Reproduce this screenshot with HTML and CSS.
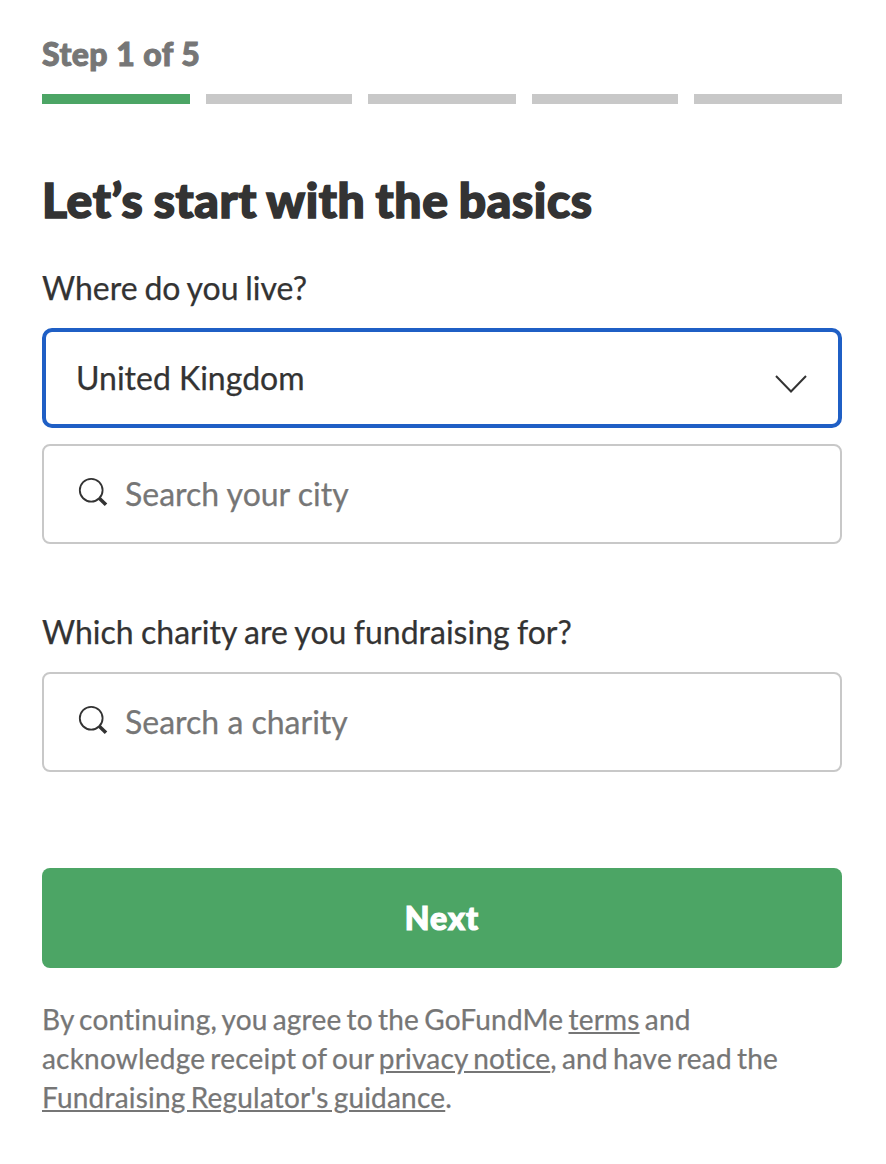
FILE: index.html
```html
<!doctype html>
<html lang="en">
<head>
    <meta charset="utf-8">
    <meta name="viewport" content="width=device-width, initial-scale=1.0">
    <title>Let’s start with the basics</title>
    <link rel="stylesheet" href="styles.css">
</head>
<body>
    <form class="container">
        <div class="step">Step 1 of 5</div>
        <div class="progress">
            <span class="bar active"></span>
            <span class="bar"></span>
            <span class="bar"></span>
            <span class="bar"></span>
            <span class="bar"></span>
        </div>

        <h1>Let’s start with the basics</h1>

        <div class="label">Where do you live?</div>
        <div class="field select">
            <span class="value">United Kingdom</span>
            <svg class="arrow" width="34" height="20" viewBox="0 0 34 20">
                <path d="M2 2 L17 17.5 L32 2" fill="none" stroke="#333" stroke-width="2"/>
            </svg>
        </div>
        <div class="field">
            <svg class="search" width="30" height="30" viewBox="0 0 30 30">
                <circle cx="13.2" cy="13.2" r="11.4" fill="none" stroke="#333" stroke-width="1.8"/>
                <path d="M21 21 L28 27.7" stroke="#333" stroke-width="3.6"/>
            </svg>
            <span class="placeholder">Search your city</span>
        </div>

        <div class="label charity">Which charity are you fundraising for?</div>
        <div class="field">
            <svg class="search" width="30" height="30" viewBox="0 0 30 30">
                <circle cx="13.2" cy="13.2" r="11.4" fill="none" stroke="#333" stroke-width="1.8"/>
                <path d="M21 21 L28 27.7" stroke="#333" stroke-width="3.6"/>
            </svg>
            <span class="placeholder">Search a charity</span>
        </div>

        <button class="next" type="button">Next</button>

        <p class="legal">By continuing, you agree to the GoFundMe <a href="#">terms</a> and<br>acknowledge receipt of our <a href="#">privacy notice</a>, and have read the<br><a href="#">Fundraising Regulator's guidance</a>.</p>
    </form>
</body>
</html>
```
FILE: styles.css
```css
* {
    box-sizing: border-box;
}

body {
    margin: 0;
    background: #fff;
    color: #333;
    font-family: Lato, sans-serif;
    -webkit-text-stroke: 0.25px;
}

.container {
    width: 800px;
    margin-left: 42px;
    padding-top: 34px;
}

.step {
    height: 60px;
    line-height: 40px;
    font-size: 32px;
    font-weight: 900;
    letter-spacing: 0.45px;
    -webkit-text-stroke: 1px #767676;
    color: #767676;
}

.progress {
    display: grid;
    grid-template-columns: 148px 146px 148px 146px 148px;
    gap: 16px;
}

.bar {
    height: 10px;
    background: #c8c8c8;
}

.bar.active {
    background: #4ca565;
}

h1 {
    margin: 66px 0 0;
    line-height: 60px;
    font-size: 48px;
    font-weight: 900;
    letter-spacing: 0.6px;
    word-spacing: -1.7px;
    -webkit-text-stroke: 1.6px #333;
}

.label {
    margin-top: 38px;
    height: 60px;
    line-height: 40px;
    font-size: 32px;
    word-spacing: -1.4px;
}

.label.charity {
    margin-top: 68px;
    word-spacing: -0.8px;
}

.field {
    display: flex;
    align-items: center;
    height: 100px;
    padding: 0 34px;
    border: 2px solid #c8c8c8;
    border-radius: 8px;
    font-size: 32px;
}

.field.select {
    justify-content: space-between;
    margin-bottom: 16px;
    padding: 0 30px;
    border: 4px solid #1f5fc5;
    border-radius: 10px;
}

.arrow {
    margin-top: 12px;
}

.search {
    margin: -4px 17px 0 0;
}

.value,
.placeholder {
    padding-bottom: 2px;
}

.placeholder {
    color: #767676;
}

.next {
    display: block;
    width: 100%;
    height: 100px;
    margin-top: 96px;
    padding: 0 0 2px;
    border: 0;
    border-radius: 8px;
    background: #4ca565;
    color: #fff;
    font-family: inherit;
    font-size: 32px;
    font-weight: 900;
    letter-spacing: 1px;
    -webkit-text-stroke: 1.2px #fff;
}

.legal {
    margin: 32px 0 0;
    line-height: 39px;
    font-size: 28px;
    letter-spacing: 0.2px;
    word-spacing: -2.2px;
    color: #767676;
}

.legal a {
    color: inherit;
}
```
